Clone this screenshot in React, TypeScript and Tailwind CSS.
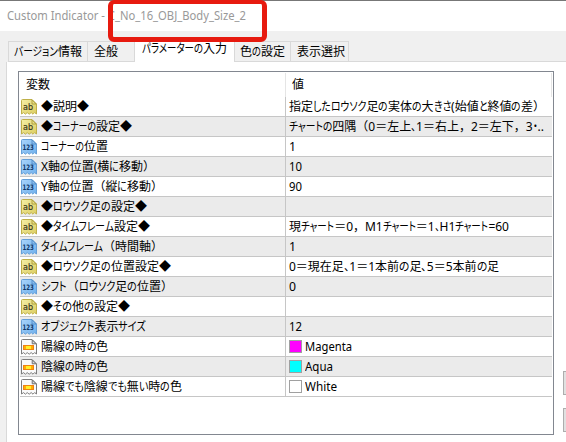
import { useLayoutEffect, useRef } from 'react';
import clsx from 'clsx';

type Kind = 'text' | 'number' | 'color';

interface Param {
  kind: Kind;
  name: string;
  nameWidth: number;
  value?: string;
  valueWidth?: number;
  swatch?: string;
}

const tabs = [
  { label: 'バージョン情報', width: 68, box: 'w-[80px] pl-[5px] border-x' },
  { label: '全般', width: 24, box: 'w-[46px] pl-[6px]' },
  { label: 'パラメーターの入力', width: 85, box: 'w-[101px] pl-[7px]', active: true },
  { label: '色の設定', width: 45, box: 'w-[56px] pl-[5px] border-r' },
  { label: '表示選択', width: 48, box: 'w-[58px] pl-[6px] border-r' },
];

const params: Param[] = [
  { kind: 'text', name: '◆説明◆', nameWidth: 48, value: '指定したロウソク足の実体の大きさ(始値と終値の差）', valueWidth: 256 },
  { kind: 'text', name: '◆コーナーの設定◆', nameWidth: 91, value: 'チャートの四隅（0＝左上、1＝右上，2＝左下，3・..', valueWidth: 255 },
  { kind: 'number', name: 'コーナーの位置', nameWidth: 67, value: '1', valueWidth: 7 },
  { kind: 'number', name: 'X軸の位置(横に移動）', nameWidth: 114, value: '10', valueWidth: 13 },
  { kind: 'number', name: 'Y軸の位置（縦に移動）', nameWidth: 122, value: '90', valueWidth: 13 },
  { kind: 'text', name: '◆ロウソク足の設定◆', nameWidth: 106 },
  { kind: 'text', name: '◆タイムフレーム設定◆', nameWidth: 109, value: '現チャート＝0，M1チャート＝1、H1チャート=60', valueWidth: 220 },
  { kind: 'number', name: 'タイムフレーム（時間軸）', nameWidth: 122, value: '1', valueWidth: 7 },
  { kind: 'text', name: '◆ロウソク足の位置設定◆', nameWidth: 130, value: '0＝現在足、1＝1本前の足、5＝5本前の足', valueWidth: 210 },
  { kind: 'number', name: 'シフト（ロウソク足の位置）', nameWidth: 132, value: '0', valueWidth: 7 },
  { kind: 'text', name: '◆その他の設定◆', nameWidth: 89 },
  { kind: 'number', name: 'オブジェクト表示サイズ', nameWidth: 105, value: '12', valueWidth: 13 },
  { kind: 'color', name: '陽線の時の色', nameWidth: 67, value: 'Magenta', valueWidth: 47, swatch: 'bg-[#ff00ff]' },
  { kind: 'color', name: '陰線の時の色', nameWidth: 67, value: 'Aqua', valueWidth: 28, swatch: 'bg-[#00ffff]' },
  { kind: 'color', name: '陽線でも陰線でも無い時の色', nameWidth: 141, value: 'White', valueWidth: 32, swatch: 'bg-white' },
];

function Label({ text, width }: { text: string; width: number }) {
  const ref = useRef<HTMLSpanElement>(null);
  const hasKana = /[ぁ-んァ-ヶー]/.test(text) || text.includes('、');
  const runs = hasKana ? text.split(/([ぁ-んァ-ヶー、・]+)/) : ['', text];

  useLayoutEffect(() => {
    const root = ref.current;
    if (!root) return;
    const inner = Array.from(root.querySelectorAll<HTMLElement>('[data-inner]'));
    inner.forEach((el) => {
      el.style.transform = '';
      el.parentElement!.style.width = '';
    });
    const widths = inner.map((el) => el.getBoundingClientRect().width);
    const flexible = widths.reduce((a, b) => a + b, 0);
    const fixed = root.getBoundingClientRect().width - flexible;
    const scale = (width - fixed) / flexible;
    inner.forEach((el, i) => {
      el.style.transform = `scaleX(${scale})`;
      el.parentElement!.style.width = `${widths[i] * scale}px`;
    });
  }, [text, width]);

  return (
    <span ref={ref} className="inline-block whitespace-nowrap">
      {runs.map((run, i) =>
        i % 2 === 0 ? (
          run
        ) : (
          <span key={i} className="inline-block">
            <span data-inner className="inline-block origin-left [font-feature-settings:'palt']">
              {run}
            </span>
          </span>
        ),
      )}
    </span>
  );
}

function ParamIcon({ kind }: { kind: Kind }) {
  if (kind === 'color') {
    return (
      <svg width="16" height="16" viewBox="0 0 16 16" className="shrink-0">
        <path d="M.5 15V1.5Q.5.5 1.5.5H11L15.5 5V15L13.6 13.6L12 15.2L10.2 13.6L8.2 15.2L6.2 13.6L4.4 15.2L2.6 13.6Z" fill="#fafafa" stroke="#7c7c7c" />
        <path d="M11.2.8V4.8H15.2Z" fill="#d8d8d8" stroke="#707070" />
        <rect x="2" y="6" width="11" height="5" fill="#f0820f" />
        <rect x="3" y="7" width="9" height="3" fill="#ffac08" />
        <rect x="5" y="7" width="5" height="3" fill="#fff02a" />
      </svg>
    );
  }
  const isText = kind === 'text';
  return (
    <svg width="16" height="16" viewBox="0 0 16 16" className="shrink-0">
      <defs>
        <linearGradient id="yellow" x1="0" y1="0" x2="1" y2="1">
          <stop offset="0" stopColor="#f5efa6" />
          <stop offset="1" stopColor="#dccd60" />
        </linearGradient>
        <linearGradient id="blue" x1="0" y1="0" x2="1" y2="1">
          <stop offset="0" stopColor="#a9d4fb" />
          <stop offset="1" stopColor="#6fb0ec" />
        </linearGradient>
      </defs>
      <path
        d="M.5 15V1.5Q.5.5 1.5.5H11L15.5 5V15L13.6 13.6L12 15.2L10.2 13.6L8.2 15.2L6.2 13.6L4.4 15.2L2.6 13.6Z"
        fill={isText ? 'url(#yellow)' : 'url(#blue)'}
        stroke={isText ? '#bfb04a' : '#659fd8'}
      />
      <path d="M11 .8V5H15.2Z" fill={isText ? '#e9df86' : '#8cc0f2'} stroke={isText ? '#a39535' : '#4c86bf'} strokeWidth=".8" />
      <text
        x={isText ? 2 : 1.4}
        y={isText ? 11.2 : 11.2}
        textLength={isText ? 10 : 11.4}
        lengthAdjust="spacingAndGlyphs"
        fontFamily="'DejaVu Sans', sans-serif"
        fontWeight={isText ? 'normal' : 'bold'}
        fontSize={isText ? 9 : 7.5}
        stroke={isText ? '#3b3820' : 'none'}
        strokeWidth=".2"
        fill={isText ? '#3b3820' : '#103868'}
      >
        {isText ? 'ab' : '123'}
      </text>
    </svg>
  );
}

function ParamRow({ param, shaded }: { param: Param; shaded: boolean }) {
  return (
    <div className={clsx('flex h-5 border-b border-[#c6c6c6]', shaded ? 'bg-[#ebebeb]' : 'bg-white')}>
      <div className="flex w-[266px] items-center gap-1 border-r border-[#c6c6c6] pl-px pt-px">
        <ParamIcon kind={param.kind} />
        <Label text={param.name} width={param.nameWidth} />
      </div>
      <div className="flex items-center gap-[3px] pl-[3px] pt-px">
        {param.swatch && <span className={clsx('mb-px size-[13px] border border-[#a0a0a0]', param.swatch)} />}
        {param.value && <Label text={param.value} width={param.valueWidth ?? 0} />}
      </div>
    </div>
  );
}

export default function App() {
  return (
    <div className="relative flex h-[442px] w-[566px] flex-col overflow-hidden bg-[#f0f0f0] font-['Noto_Sans','Noto_Sans_CJK_JP',sans-serif] text-[12px] leading-[18px] text-black">
      <header className="h-[31px] shrink-0 border-t border-[#777777] bg-white pl-[7px] pt-[6px] text-[#999999]">
        <Label text="Custom Indicator - C_No_16_OBJ_Body_Size_2" width={239} />
      </header>

      <nav className="flex h-[31px] shrink-0 items-end pl-2">
        {tabs.map((tab) => (
          <div
            key={tab.label}
            className={clsx(
              'border-[#d9d9d9]',
              tab.box,
              tab.active ? 'h-[23px] border-x border-t bg-white' : 'h-[21px] border-y pt-px',
            )}
          >
            <Label text={tab.label} width={tab.width} />
          </div>
        ))}
        <div className="flex-1 border-b border-[#d9d9d9]" />
      </nav>

      <main className="ml-[6px] flex flex-1 justify-between border-l border-[#d9d9d9] bg-white pl-[11px] pt-[9px]">
        <div className="flex h-[364px] w-[536px] flex-col border border-[#828790] px-px">
          <div className="flex h-[25px] pt-px">
            <div className="w-[266px] border-r border-[#e5e5e5] pl-[6px] pt-[3px]">
              <Label text="変数" width={24} />
            </div>
            <div className="flex-1 border-r border-[#e5e5e5] pl-[6px] pt-[3px]">
              <Label text="値" width={12} />
            </div>
          </div>
          {params.map((param, i) => (
            <ParamRow key={param.name} param={param} shaded={i % 2 === 1} />
          ))}
        </div>
        <div className="flex w-[3px] flex-col gap-[13px] pt-[300px]">
          <div className="h-6 border border-r-0 border-[#adadad] bg-[#e1e1e1]" />
          <div className="h-6 border border-r-0 border-[#adadad] bg-[#e1e1e1]" />
        </div>
      </main>

      <div className="absolute left-[108px] top-0 z-20 h-[42px] w-[159px] rounded-[6px] border-[5px] border-t-4 border-[#e71a0f]" />
    </div>
  );
}
